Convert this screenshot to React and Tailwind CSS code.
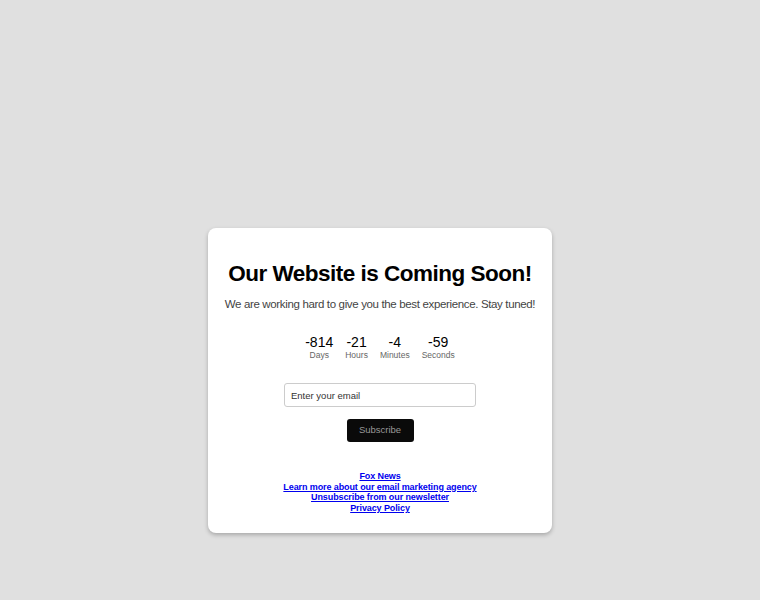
import { useState } from "react";

const units = [
  { value: -814, label: "Days" },
  { value: -21, label: "Hours" },
  { value: -4, label: "Minutes" },
  { value: -59, label: "Seconds" },
];

const links = [
  "Fox News",
  "Learn more about our email marketing agency",
  "Unsubscribe from our newsletter",
  "Privacy Policy",
];

export default function App() {
  const [email, setEmail] = useState("");

  return (
    <div className="min-h-screen bg-[#e0e0e0] pt-[228px] pb-10 font-['Liberation_Sans',Arial,sans-serif]">
      <div className="mx-auto w-[344px] rounded-lg bg-white px-2 pt-[33px] pb-[20px] text-center shadow-[0_2px_4px_rgba(0,0,0,0.25)]">
        <h1 className="text-[22.5px] font-bold leading-[26px] tracking-[-0.5px] text-black">
          Our Website is Coming Soon!
        </h1>
        <p className="mt-[9px] whitespace-nowrap text-[11.5px] leading-[16px] tracking-[-0.35px] text-[#444]">
          We are working hard to give you the best experience. Stay tuned!
        </p>

        <div className="mt-[22px] flex justify-center gap-3">
          {units.map((u) => (
            <div key={u.label} className="flex flex-col items-center">
              <span className="text-[14px] leading-[16px] text-black">{u.value}</span>
              <span className="text-[8.5px] leading-[11px] text-[#666]">{u.label}</span>
            </div>
          ))}
        </div>

        <div className="mt-[22px] flex justify-center">
          <input
            type="email"
            value={email}
            onChange={(e) => setEmail(e.target.value)}
            placeholder="Enter your email"
            className="h-[24px] w-[192px] rounded-[3px] border border-[#ccc] px-[6px] text-[9.5px] text-black placeholder:text-[#333] outline-none"
          />
        </div>
        <button className="mt-[12px] h-[23px] w-[67px] rounded-[3px] bg-[#0a0a0a] text-[9.5px] text-[#999]">
          Subscribe
        </button>

        <div className="mt-[29px] flex flex-col items-center text-[9px] leading-[10.6px]">
          {links.map((l) => (
            <a key={l} href="#" className="font-bold tracking-[-0.1px] text-[#0000ee] underline">
              {l}
            </a>
          ))}
        </div>
      </div>
    </div>
  );
}
